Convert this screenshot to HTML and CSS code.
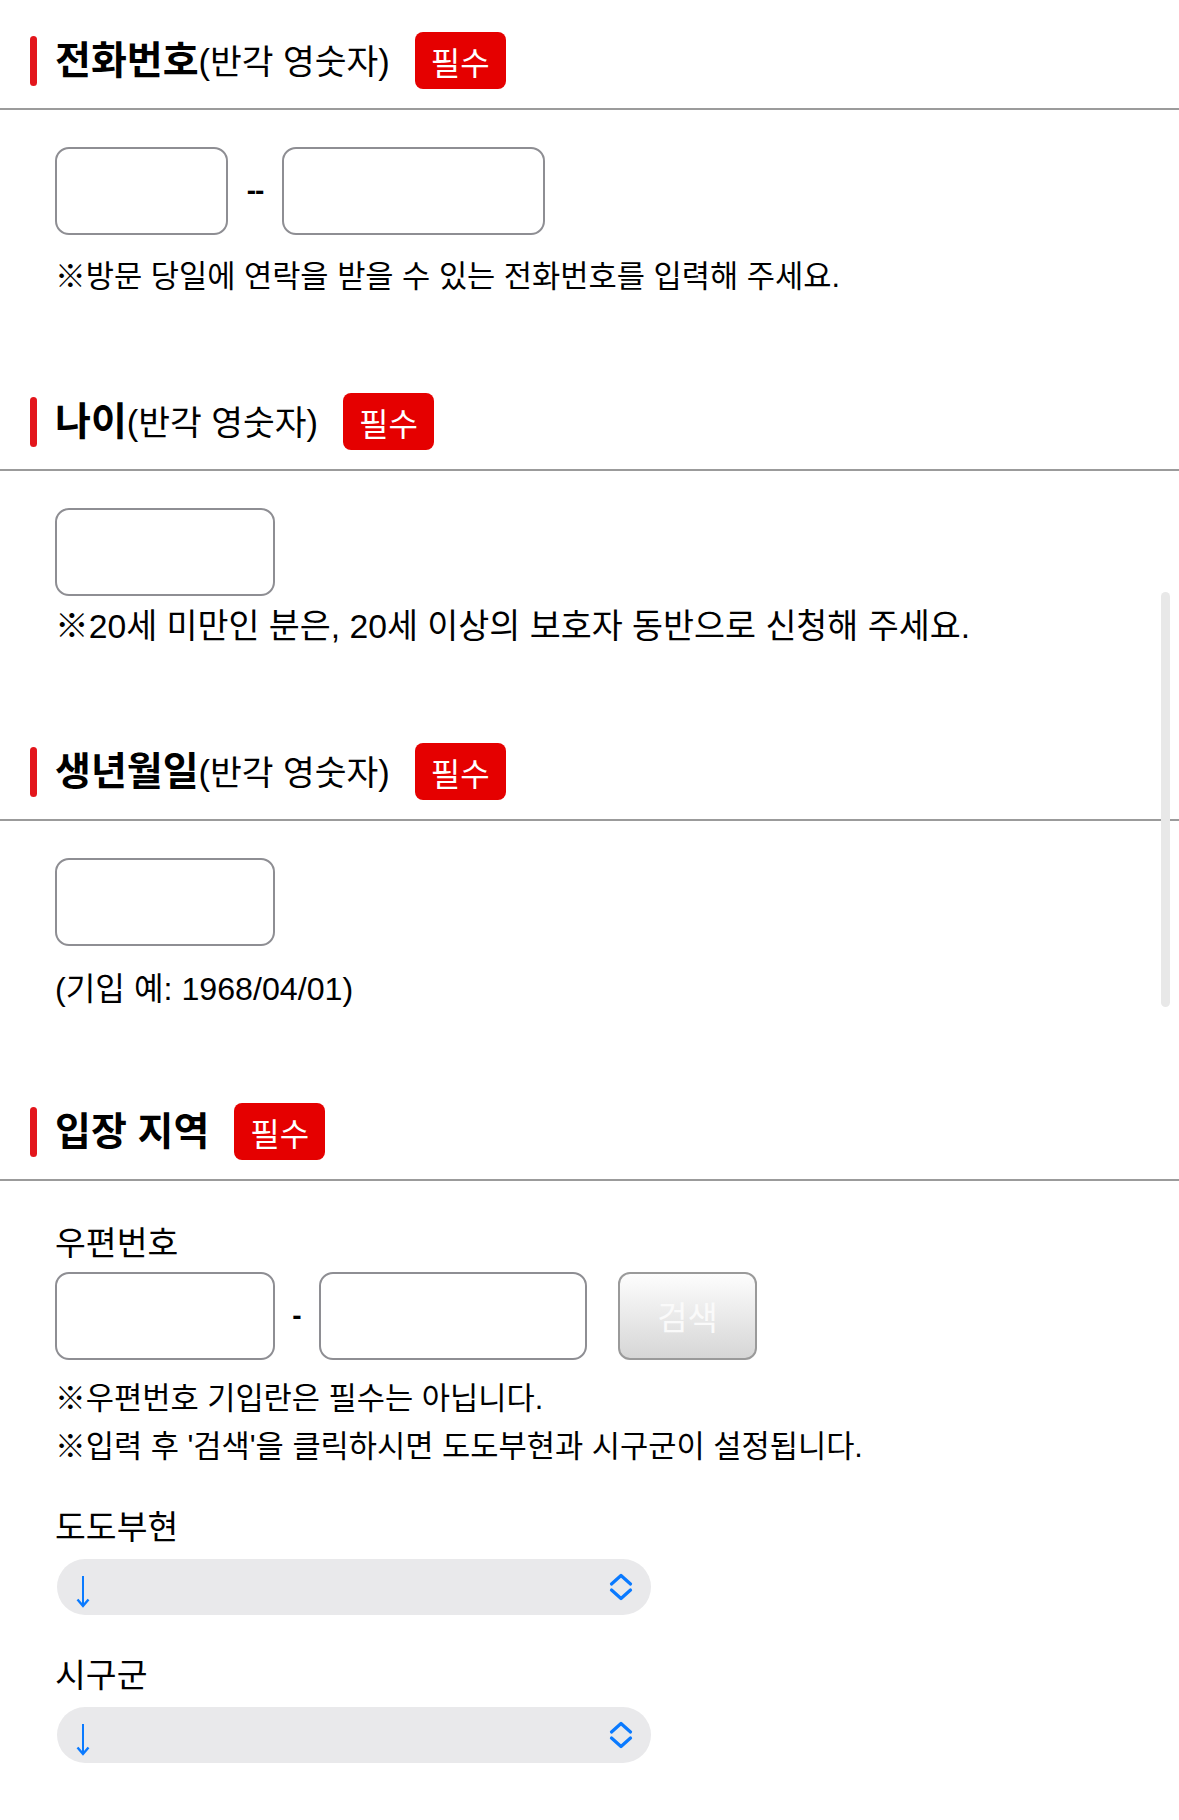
FILE: index.html
```html
<!DOCTYPE html>
<html lang="ko">
<head>
    <meta charset="UTF-8">
    <meta name="viewport" content="width=device-width, initial-scale=1.0">
    <title>입장 신청</title>
    <link rel="stylesheet" href="styles.css">
</head>
<body>

    <form class="entry-form" onsubmit="return false">

        <!-- 전화번호 -->
        <section class="field field-phone">
            <div class="field-head">
                <span class="mark"></span>
                <h2 class="field-title">전화번호<span class="field-sub">(반각 영숫자)</span></h2>
                <span class="badge">필수</span>
            </div>
            <div class="field-body">
                <div class="input-row">
                    <input type="tel" class="text-input w-173">
                    <span class="sep sep-double">--</span>
                    <input type="tel" class="text-input w-263">
                </div>
                <p class="note note-phone">※방문 당일에 연락을 받을 수 있는 전화번호를 입력해 주세요.</p>
            </div>
        </section>

        <!-- 나이 -->
        <section class="field field-age">
            <div class="field-head">
                <span class="mark"></span>
                <h2 class="field-title">나이<span class="field-sub">(반각 영숫자)</span></h2>
                <span class="badge">필수</span>
            </div>
            <div class="field-body">
                <input type="text" class="text-input w-220">
                <p class="note note-age">※20세 미만인 분은, 20세 이상의 보호자 동반으로 신청해 주세요.</p>
            </div>
        </section>

        <!-- 생년월일 -->
        <section class="field field-birth">
            <div class="field-head">
                <span class="mark"></span>
                <h2 class="field-title">생년월일<span class="field-sub">(반각 영숫자)</span></h2>
                <span class="badge">필수</span>
            </div>
            <div class="field-body">
                <input type="text" class="text-input w-220">
                <p class="note note-birth">(기입 예: 1968/04/01)</p>
            </div>
        </section>

        <!-- 입장 지역 -->
        <section class="field field-area">
            <div class="field-head">
                <span class="mark"></span>
                <h2 class="field-title">입장 지역</h2>
                <span class="badge">필수</span>
            </div>
            <div class="field-body">
                <label class="sub-label label-zip">우편번호</label>
                <div class="input-row">
                    <input type="text" class="text-input w-220">
                    <span class="sep">-</span>
                    <input type="text" class="text-input w-268">
                    <button type="button" class="search-btn">검색</button>
                </div>
                <p class="note note-zip">※우편번호 기입란은 필수는 아닙니다.<br>※입력 후 '검색'을 클릭하시면 도도부현과 시구군이 설정됩니다.</p>

                <label class="sub-label label-pref">도도부현</label>
                <div class="select-box">
                    <svg class="select-arrow" width="14" height="32" viewBox="0 0 14 32">
                        <line x1="7" y1="0" x2="7" y2="30" stroke="#0a7aff" stroke-width="2"/>
                        <path d="M1.5 23.5 L7 30 L12.5 23.5" fill="none" stroke="#0a7aff" stroke-width="2.4"/>
                    </svg>
                    <svg class="select-chevron" width="24" height="28" viewBox="0 0 24 28">
                        <path d="M2.5 11 L12 2.5 L21.5 11 M2.5 17 L12 25.5 L21.5 17" fill="none" stroke="#0a7aff" stroke-width="3.2" stroke-linecap="round" stroke-linejoin="round"/>
                    </svg>
                </div>

                <label class="sub-label label-city">시구군</label>
                <div class="select-box">
                    <svg class="select-arrow" width="14" height="32" viewBox="0 0 14 32">
                        <line x1="7" y1="0" x2="7" y2="30" stroke="#0a7aff" stroke-width="2"/>
                        <path d="M1.5 23.5 L7 30 L12.5 23.5" fill="none" stroke="#0a7aff" stroke-width="2.4"/>
                    </svg>
                    <svg class="select-chevron" width="24" height="28" viewBox="0 0 24 28">
                        <path d="M2.5 11 L12 2.5 L21.5 11 M2.5 17 L12 25.5 L21.5 17" fill="none" stroke="#0a7aff" stroke-width="3.2" stroke-linecap="round" stroke-linejoin="round"/>
                    </svg>
                </div>
            </div>
        </section>

    </form>

    <!-- overlay scroll indicator -->
    <div class="scroll-indicator"></div>

</body>
</html>
```

FILE: styles.css
```css
/* Base */
body {
    margin: 0;
    background-color: #fff;
    color: #000;
    font-family: "Liberation Sans", "Noto Sans CJK KR", sans-serif;
}

/* Field header */
.field-head {
    display: flex;
    align-items: center;
    padding: 32px 0 19px 30px;
    border-bottom: 2px solid #9b9b9b;
}
.mark {
    width: 7px;
    height: 50px;
    border-radius: 4px;
    background-color: #e3161c;
    margin-right: 18px;
}
.field-title {
    margin: 0;
    font-size: 39px;
    font-weight: bold;
    line-height: 1;
}
.field-sub {
    font-size: 34.5px;
    font-weight: normal;
}
.badge {
    display: flex;
    align-items: center;
    height: 57px;
    padding: 0 16px;
    margin-left: 25px;
    border-radius: 8px;
    background-color: #e50000;
    color: #fff;
    font-size: 32px;
}

/* Field body */
.field-body {
    padding: 37px 55px 64px;
}
.input-row {
    display: flex;
    align-items: center;
}
.text-input {
    display: block;
    box-sizing: border-box;
    height: 88px;
    border: 2px solid #8e8e93;
    border-radius: 14px;
    background-color: #fff;
    font-size: 30px;
    padding: 0 12px;
    margin: 0;
}
.w-173 { width: 173px; }
.w-220 { width: 220px; }
.w-263 { width: 263px; }
.w-268 { width: 268px; }

.sep {
    width: 44px;
    text-align: center;
    font-size: 28px;
    font-weight: bold;
}
.sep-double {
    width: 54px;
    letter-spacing: -1px;
}

.search-btn {
    box-sizing: border-box;
    width: 139px;
    height: 88px;
    margin-left: 31px;
    border: 2px solid #9a9a9a;
    border-radius: 12px;
    background: linear-gradient(#fdfdfd, #d6d6d6);
    color: #fafafa;
    font-family: inherit;
    font-size: 33px;
}

/* Notes */
.note {
    margin: 0;
    font-size: 30.7px;
    line-height: 40px;
}
.note-phone { margin-top: 22px; }
.note-age { margin-top: 10px; font-size: 33.7px; }
.note-birth { margin-top: 23px; font-size: 32.2px; }
.field-age .field-body { padding-bottom: 65px; }
.field-birth .field-body { padding-bottom: 62px; }

.note-zip {
    margin-top: 15px;
    line-height: 48px;
}

/* Area */
.field-area .field-body {
    padding-top: 43px;
    padding-bottom: 56px;
}
.sub-label {
    display: block;
    font-size: 33.5px;
    line-height: 40px;
}
.label-zip { margin-bottom: 8px; }
.label-pref { margin-top: 37px; margin-bottom: 11px; }
.label-city { margin-top: 41px; margin-bottom: 11px; }

.select-box {
    display: flex;
    align-items: center;
    justify-content: space-between;
    box-sizing: border-box;
    width: 594px;
    height: 56px;
    margin-left: 2px;
    padding: 0 18px 0 19px;
    border-radius: 28px;
    background-color: #e9e9eb;
}
.select-arrow {
    margin-top: 9px;
}

/* Overlay scroll indicator */
.scroll-indicator {
    position: fixed;
    top: 592px;
    right: 9px;
    width: 9px;
    height: 415px;
    border-radius: 5px;
    background-color: #e8e8e8;
}
```
